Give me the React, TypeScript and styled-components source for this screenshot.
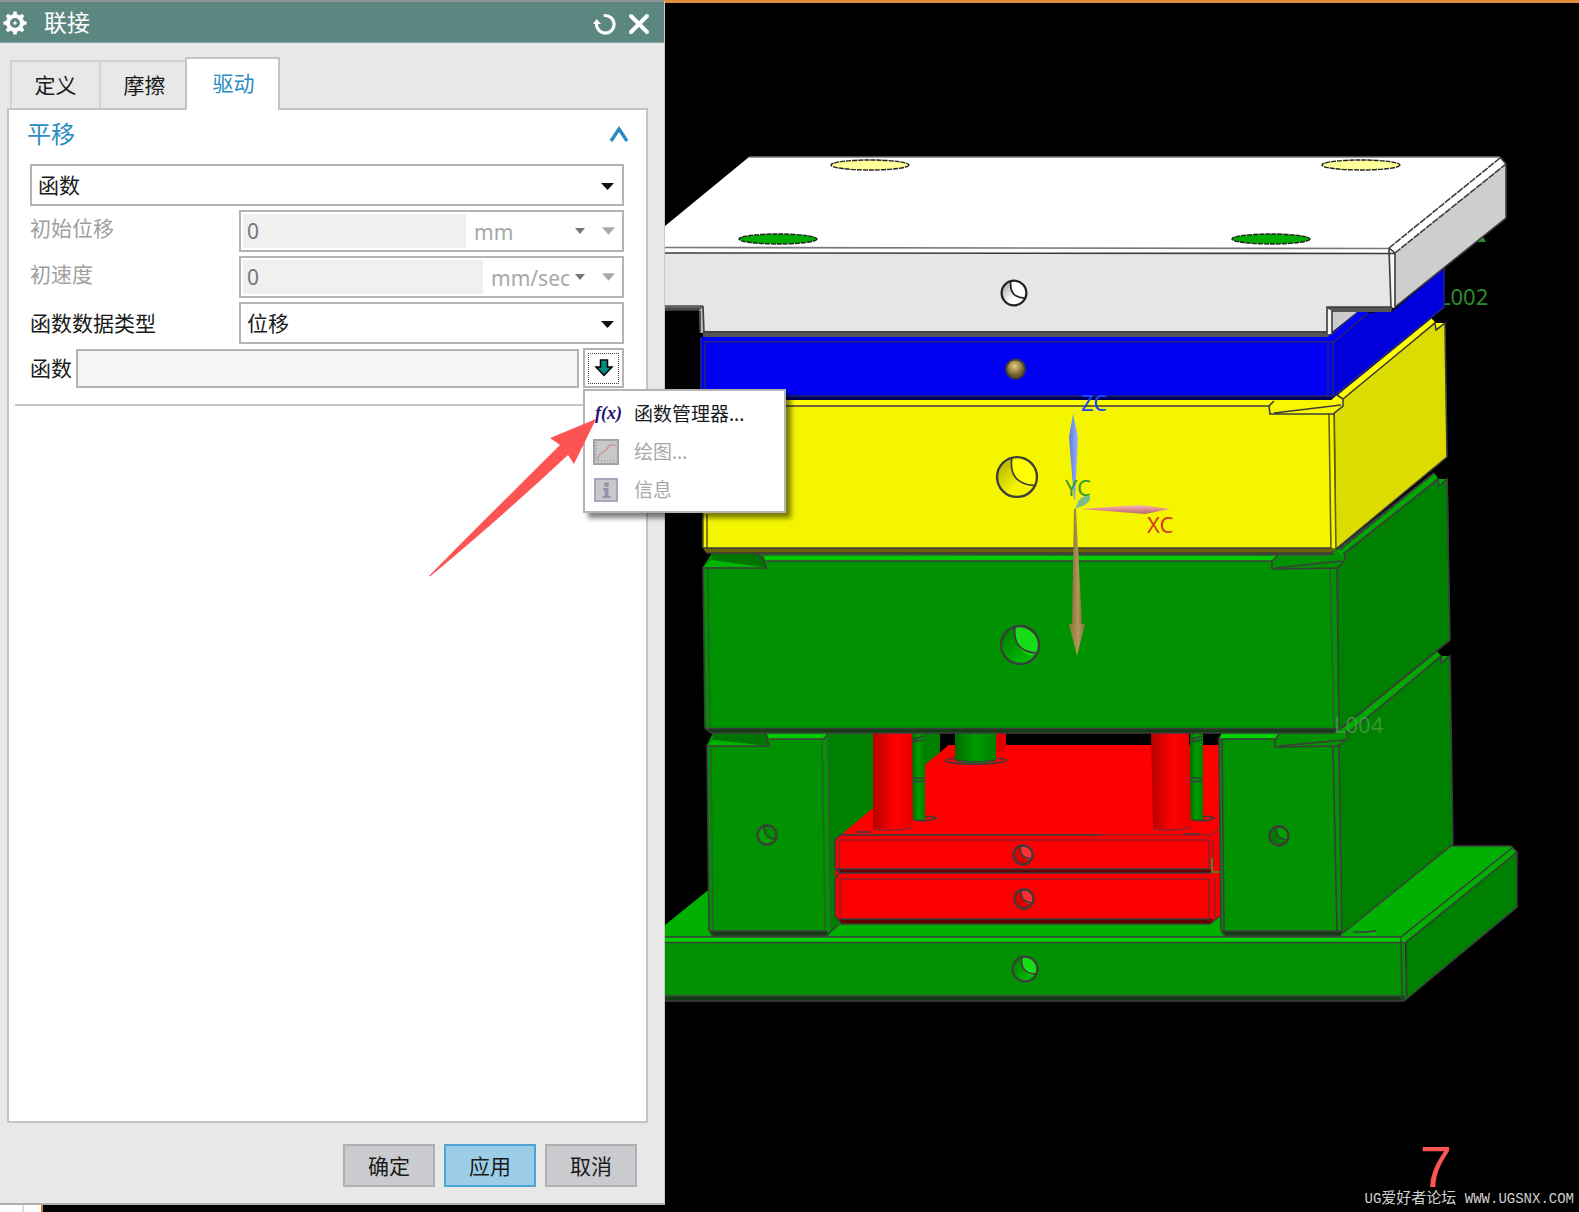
import React from "react";
import styled, { createGlobalStyle, css } from "styled-components";

const GlobalStyle = createGlobalStyle`
  *, *::before, *::after { box-sizing: border-box; }
  body {
    margin: 0;
    background: #000;
    font-family: "Noto Sans", "Noto Sans CJK SC", sans-serif;
    font-size: 21px;
    line-height: 28px;
    color: #1a1a1a;
  }
  button, input, select { font: inherit; color: inherit; margin: 0; }
`;

const Screen = styled.div`
  display: grid;
  grid-template-columns: 665px minmax(0, 1fr);
  min-height: 100vh;
`;

const LeftColumn = styled.div`
  display: flex;
  flex-direction: column;
`;

const Dialog = styled.section`
  flex: 1;
  display: flex;
  flex-direction: column;
  background: #e8e8e8;
  border-top: 2px solid #8c9494;
  border-right: 1px solid #c8c8c8;
  border-bottom: 2px solid #b0b0b0;
`;

const TitleBar = styled.header`
  display: flex;
  align-items: center;
  height: 41px;
  padding: 0 14px 0 3px;
  background: #5b8780;
  border-bottom: 1px solid #7fa39d;
  color: #fff;
`;

const Title = styled.h1`
  flex: 1;
  margin: 0 0 0 17px;
  font-size: 23px;
  font-weight: 400;
  line-height: 28px;
`;

const TitleButton = styled.button`
  display: flex;
  padding: 4px 0 0;
  margin-left: 11px;
  border: 0;
  background: none;
`;

const Body = styled.div`
  flex: 1;
  display: flex;
  flex-direction: column;
  padding: 14px 16px 16px 7px;
`;

const Tabs = styled.div`
  display: flex;
  align-items: flex-end;
  padding-left: 3px;
`;

const Tab = styled.button<{ $active?: boolean }>`
  height: 48px;
  width: 89px;
  padding: 0;
  border: 2px solid #d2d2d2;
  border-bottom: 0;
  border-right: 0;
  background: #e8e8e8;
  ${(p) =>
    p.$active &&
    css`
      position: relative;
      height: 53px;
      width: 95px;
      margin-bottom: -2px;
      margin-left: -3px;
      padding: 0 0 4px 2px;
      background: #fff;
      border-right: 2px solid #c4c4c4;
      border-color: #c4c4c4;
      color: #2b8cc4;
    `}
`;

const Panel = styled.div`
  flex: 1;
  border: 2px solid #c4c4c4;
  background: #fff;
  padding: 8px 6px;
`;

const GroupHeader = styled.div`
  display: flex;
  align-items: center;
  justify-content: space-between;
  height: 32px;
  padding: 0 11px 0 12px;
  color: #2b8cc4;
`;

const GroupTitle = styled.h2`
  margin: 0;
  font-size: 24px;
  font-weight: 400;
  line-height: 32px;
`;

const Toggle = styled.button`
  display: flex;
  padding: 0;
  border: 0;
  background: none;
`;

const Form = styled.div`
  display: grid;
  grid-template-columns: 209px minmax(0, 1fr);
  gap: 4px 0;
  align-items: center;
  padding: 14px 16px 16px 15px;
  border-bottom: 2px solid #c8c8c8;
`;

const Label = styled.label<{ $dim?: boolean }>`
  color: ${(p) => (p.$dim ? "#a0a0a0" : "#1a1a1a")};
  padding-bottom: ${(p) => (p.$dim ? "6px" : "0")};
`;

const SelectBox = styled.div<{ $wide?: boolean }>`
  position: relative;
  height: 42px;
  border: 2px solid #b4b4b4;
  background: #fff;
  grid-column: ${(p) => (p.$wide ? "1 / -1" : "auto")};
`;

const Select = styled.select`
  appearance: none;
  width: 100%;
  height: 100%;
  padding: 0 32px 0 6px;
  border: 0;
  background: transparent;
`;

const Caret = styled.svg`
  position: absolute;
  right: 8px;
  top: 17px;
  pointer-events: none;
`;

const ValueField = styled.div`
  display: flex;
  height: 42px;
  padding: 2px;
  border: 2px solid #b4b4b4;
  background: #fff;
`;

const ValueInput = styled.input`
  flex: 1;
  min-width: 0;
  padding: 0 4px;
  border: 0;
  background: #f0f0f0;
  color: #777;
`;

const UnitBox = styled.div<{ $wide?: boolean }>`
  position: relative;
  width: ${(p) => (p.$wide ? "122px" : "105px")};
  color: #a8a8a8;
`;

const UnitSelect = styled.select`
  appearance: none;
  width: 100%;
  height: 100%;
  padding: 2px 0 0 8px;
  border: 0;
  background: transparent;
  opacity: 1;
`;

const UnitCaret = styled.svg`
  position: absolute;
  right: 3px;
  top: 14px;
  pointer-events: none;
`;

const MoreButton = styled.button`
  display: flex;
  align-items: center;
  justify-content: center;
  width: 32px;
  padding: 0 0 0 9px;
  border: 0;
  background: none;
`;

const FunctionRow = styled.div`
  grid-column: 1 / -1;
  display: flex;
  align-items: center;
  gap: 4px;
`;

const FunctionInput = styled.input`
  flex: 1;
  min-width: 0;
  height: 39px;
  border: 2px solid #b4b4b4;
  background: #f5f5f5;
`;

const MenuAnchor = styled.div`
  position: relative;
`;

const MenuButton = styled.button`
  display: flex;
  align-items: center;
  justify-content: center;
  width: 41px;
  height: 40px;
  padding: 3px;
  border: 2px solid #b4b4b4;
  background: #fff;
  & > span {
    display: flex;
    align-items: center;
    justify-content: center;
    width: 31px;
    height: 31px;
    border: 1px dotted #444;
  }
`;

const Menu = styled.div`
  position: absolute;
  z-index: 2;
  top: 41px;
  left: 0;
  width: 203px;
  padding: 4px 0 2px;
  border: 2px solid #b4b4b4;
  background: #fff;
  box-shadow: 5px 5px 5px rgba(0, 0, 0, 0.5);
`;

const MenuItem = styled.button`
  display: flex;
  align-items: center;
  width: 100%;
  height: 38px;
  padding: 0 0 0 7px;
  gap: 12px;
  border: 0;
  background: none;
  font-size: 19px;
  white-space: nowrap;
  &:disabled { color: #a8a8a8; }
`;

const PointerArrow = styled.svg`
  position: absolute;
  z-index: 3;
  top: 67px;
  left: -158px;
  pointer-events: none;
`;

const Footer = styled.footer`
  display: flex;
  justify-content: flex-end;
  gap: 9px;
  padding: 21px 11px 0 0;
`;

const ActionButton = styled.button<{ $primary?: boolean }>`
  width: 92px;
  height: 43px;
  padding: 0;
  border: 2px solid ${(p) => (p.$primary ? "#4ea5d4" : "#b0b0b0")};
  background: ${(p) => (p.$primary ? "#9bcde7" : "#cacbcf")};
`;

const WindowEdge = styled.div`
  width: 43px;
  height: 7px;
  background: linear-gradient(to right, #fff 22px, #ddd 22px, #ddd 24px, #fff 24px);
  border-right: 2px solid #c87828;
`;

const Viewport = styled.main`
  position: relative;
  background: #000;
  border-top: 3px solid #e08c3c;
`;

const Model = styled.svg`
  display: block;
  width: 100%;
  font-size: 22px;
`;

const Marks = styled.div`
  position: absolute;
  right: 5px;
  bottom: 0;
`;

const StepNumber = styled.div`
  padding-right: 122px;
  text-align: right;
  font-family: "Liberation Sans", sans-serif;
  font-size: 58px;
  line-height: 40px;
  color: #fc5353;
`;

const Watermark = styled.div`
  font-family: "Liberation Mono", "Noto Sans CJK SC", monospace;
  font-size: 14px;
  line-height: 24px;
  color: #d0d0d0;
  & > span { font-size: 15px; }
`;

const teeth = [0, 45, 90, 135, 180, 225, 270, 315];

const GearIcon = () => (
  <svg width="24" height="26" viewBox="0 -2 24 26" aria-hidden="true">
    <circle cx="12" cy="12" r="7" fill="none" stroke="#fff" strokeWidth="4" />
    {teeth.map((a) => (
      <path key={a} d="M9.8 4 L10.4 .4 H13.6 L14.2 4Z" fill="#fff" transform={`rotate(${a} 12 12)`} />
    ))}
    <circle cx="12" cy="12" r="1.7" fill="#fff" />
  </svg>
);

const Triangle = ({ fill }: { fill: string }) => (
  <svg width="13" height="8" viewBox="0 0 12 7" aria-hidden="true">
    <path d="M0 0H12L6 7Z" fill={fill} />
  </svg>
);

const DropDown = ({ id, value, wide, label }: { id: string; value: string; wide?: boolean; label?: string }) => (
  <SelectBox $wide={wide}>
    <Select id={id} aria-label={label}>
      <option>{value}</option>
    </Select>
    <Caret width="13" height="7" viewBox="0 0 13 7" aria-hidden="true">
      <path d="M0 0H13L6.5 7Z" fill="#111" />
    </Caret>
  </SelectBox>
);

const Quantity = ({ id, unit, wide }: { id: string; unit: string; wide?: boolean }) => (
  <ValueField>
    <ValueInput id={id} defaultValue="0" disabled />
    <UnitBox $wide={wide}>
      <UnitSelect disabled aria-label="单位">
        <option>{unit}</option>
      </UnitSelect>
      <UnitCaret width="10" height="6" viewBox="0 0 10 6" aria-hidden="true">
        <path d="M0 0H10L5 6Z" fill="#777" />
      </UnitCaret>
    </UnitBox>
    <MoreButton disabled aria-label="更多">
      <Triangle fill="#aaa" />
    </MoreButton>
  </ValueField>
);

type Face = [points: string, fill: string];

const Faces = ({ items }: { items: Face[] }) => (
  <>
    {items.map(([points, fill], i) => (
      <polygon key={i} points={points} fill={fill} />
    ))}
  </>
);

const edge = "#3c3c3c";

const Edges = ({ d, color = edge, dash }: { d: string; color?: string; dash?: boolean }) => (
  <path d={d} fill="none" stroke={color} strokeWidth="1.6" strokeDasharray={dash ? "7 1" : undefined} />
);

const Bore = ({ x, y, r, fill, shine, stroke = edge }: { x: number; y: number; r: number; fill: string; shine: string; stroke?: string }) => (
  <g transform={`translate(${x} ${y}) scale(${r / 20})`}>
    <circle r="19" fill={fill} />
    <path d="M-5 -18C6 -20 19 -10 19 2C17 8 14 10 10 10C0 7 -7 -2 -5 -18Z" fill={shine} />
    <path d="M-5 -18C-7 -2 0 7 16 8" fill="none" stroke={stroke} strokeWidth={34 / r} />
    <circle r="19" fill="none" stroke={stroke} strokeWidth={46 / r} />
  </g>
);

const MoldModel = () => (
  <Model viewBox="665 3 914 1209" role="img" aria-label="模架三维模型">
    <defs>
      <linearGradient id="redPin">
        <stop offset="0" stopColor="#b80000" />
        <stop offset=".55" stopColor="#ff0000" />
        <stop offset="1" stopColor="#e80000" />
      </linearGradient>
      <linearGradient id="greenPin">
        <stop offset="0" stopColor="#006c00" />
        <stop offset=".5" stopColor="#009c00" />
        <stop offset="1" stopColor="#008000" />
      </linearGradient>
      <linearGradient id="under" x2="0" y2="1">
        <stop offset="0" stopColor="#777" />
        <stop offset="1" stopColor="#333" />
      </linearGradient>
      <linearGradient id="steel" x2="1" y2="1">
        <stop offset="0" stopColor="#999" />
        <stop offset=".6" stopColor="#fff" />
      </linearGradient>
      <linearGradient id="brass" x2="1" y2="1">
        <stop offset="0" stopColor="#a8a800" />
        <stop offset=".6" stopColor="#f4f400" />
      </linearGradient>
      <linearGradient id="leaf" x2="1" y2="1">
        <stop offset="0" stopColor="#007400" />
        <stop offset=".8" stopColor="#00bc00" />
      </linearGradient>
      <radialGradient id="ball" cx=".45" cy=".35">
        <stop offset="0" stopColor="#e4cc80" />
        <stop offset="1" stopColor="#6c5c28" />
      </radialGradient>
      <linearGradient id="axisZ">
        <stop offset="0" stopColor="#5a7ae0" />
        <stop offset="1" stopColor="#9ab4ff" />
      </linearGradient>
      <linearGradient id="axisX" x2="0" y2="1">
        <stop offset="0" stopColor="#ffb4b4" />
        <stop offset="1" stopColor="#b86868" />
      </linearGradient>
      <linearGradient id="axisDown">
        <stop offset="0" stopColor="#8c743c" />
        <stop offset=".6" stopColor="#b09858" />
        <stop offset="1" stopColor="#84703c" />
      </linearGradient>
    </defs>

    <text x="1439" y="305" fill="#2c8c2c">L002</text>
    <path d="M1477 242L1483 237L1486 242Z" fill="#2c8c2c" />

    <Faces
      items={[
        ["665,925 712,887 1453,846 1511,846 1517,852 1404,944 665,940", "#00b000"],
        ["665,937 1402,937 1406,943 665,943", "#00d400"],
        ["665,943 1405,943 1405,998 665,998", "#009000"],
        ["665,996 1406,996 1403,1001 665,1001", "#143c14"],
        ["1406,943 1517,852 1517,907 1404,1001", "#008000"],
      ]}
    />
    <Edges d="M665 937H1401M665 942.5H1405M1401 937L1402 1000M1406 942L1407 997M1401 937L1512 848M1406 942L1517 852M1517 852V907L1404 1001M1453 846H1511L1517 852M665 996H1402M665 1001H1404M1353 932H1365L1376 931" />

    <Faces
      items={[
        ["828,733 940,733 940,757 840,840 840,922 827,936", "#008000"],
        ["949,745 1222,745 1222,916 1210,923 841,923 835,917 835,840", "#fa0000"],
        ["949,745 1222,745 1222,829 1210,836 840,836", "#ff0000"],
        ["835,869 1210,869 1213,873 839,873", "#640000"],
        ["839,919 1213,919 1210,924 841,924", "#640000"],
        ["996,733 1006,733 1006,752 996,752", "#e00000"],
      ]}
    />
    <rect x="912" y="733" width="13" height="87" fill="url(#greenPin)" />
    <rect x="1190" y="733" width="13" height="87" fill="url(#greenPin)" />
    <path d="M955 733V761Q975 766 996 761V733Z" fill="url(#greenPin)" />
    <path d="M873 733V828Q893 831 913 827L912 733Z" fill="url(#redPin)" />
    <path d="M1151 733L1153 828Q1170 831 1191 827L1189 733Z" fill="url(#redPin)" />
    <Edges d="M912 740L924 736M912 742L924 740M912 778H924M912 782L924 781M1190 740L1202 736M1190 742L1202 740M1190 778H1202M1190 782L1202 781M914 820Q930 822 936 818Q930 815 925 817M1192 820Q1208 822 1214 818Q1208 815 1203 817M955 758C935 761 950 764 975 764C1000 764 1018 760 996 758M955 760Q975 764 996 760M855 832H871M1183 834H1200" />
    <Edges color="#90202a" d="M840 835H1209M838 840H1209M840 879H1209M839 840V869M840 879V919M1209 840V869M1209 879V919M1213 840V867M1215 878V919M1209 837L1219 828M873 829Q893 832 913 828M1153 829Q1170 832 1191 828" />
    <Edges d="M838 835H1100M835 840L840 835M835 840V868L840 872L835 879V916L841 923M836 869H1210M840 873H1212M840 919H1210M841 924H1210L1220 916" />
    <Edges color="#30a030" d="M1212 858V872H1221" />

    <Faces
      items={[
        ["707,745 713,733 828,733 831,929 827,936 713,936 709,930", "#009200"],
        ["767,733 829,733 824,739 769,739", "#00cc00"],
        ["713,734 766,734 769,746 713,740", "#007400"],
        ["713,740 769,746 707,746", "#00b400"],
        ["710,931 828,931 826,936 713,936", "#143c14"],
        ["1219,738 1222,733 1340,727 1349,738 1343,933 1340,936 1225,936 1221,931", "#009200"],
        ["1222,733 1279,733 1275,739 1219,739", "#00d400"],
        ["1221,931 1343,931 1340,936 1224,936", "#143c14"],
        ["1340,729 1437,651 1441,656 1348,736", "#00a800"],
        ["1340,746 1348,738 1346,733 1441,657 1442,663 1448,656 1450,656 1453,844 1343,933", "#008000"],
        ["1448,656 1442,656 1442,663", "#00a800"],
      ]}
    />
    <Edges color="#2c6030" d="M711 746L713 932M822 739L825 932M828 734L831 928" />
    <Edges d="M707 746H769L766 734M769 739H824L828 734M707 745L709 930L713 936H827L831 931L841 923M710 931H826M1219 738L1221 930L1225 936H1340L1343 931M1219 739H1275M1222 739L1224 931H1340M1279 734L1275 740V747L1338 746L1348 738L1346 730M1279 746L1345 740M1333 747L1337 932M1339 744L1342 932M1342 728L1437 651M1348 734L1441 656V663L1450 656L1453 844L1343 933" />

    <Faces
      items={[
        ["703,567 712,553 1331,552 1341,547 1347,556 1339,729 1334,733 711,733 705,728", "#009200"],
        ["712,552 1331,552 1328,556 712,556", "#2c6c2c"],
        ["764,556 1278,556 1273,561 766,561", "#00cc00"],
        ["712,553 755,553 763,557 766,567 712,560", "#007400"],
        ["712,560 766,568 703,567", "#00b400"],
        ["706,728 1339,728 1334,733 711,733", "#143c14"],
        ["1336,551 1434,473 1438,478 1345,558", "#00a800"],
        ["1337,568 1345,559 1344,552 1438,479 1439,486 1446,479 1448,479 1450,640 1339,730", "#008000"],
        ["1447,479 1438,479 1439,486", "#00a800"],
      ]}
    />
    <Edges color="#2c6030" d="M708 569L710 728M1330 569L1334 730" />
    <Edges d="M712 553L1334 554M766 561H1272M712 553H755Q765 557 766 568H704M703 567L705 728L711 733H1334L1339 729M706 728.5H1335M1278 555L1272 561V569L1337 568L1345 560L1344 552M1275 568L1342 561M1337 568L1339 728M1338 549L1434 473M1345 553L1438 479L1439 486L1447 479L1450 640L1339 730" />

    <Faces
      items={[
        ["703,400 1334,400 1336,550 1331,553 707,553 703,548", "#f5f500"],
        ["703,400 1274,400 1269,406 703,406", "#ffff00"],
        ["703,548 1335,548 1331,553 707,553", "#686400"],
        ["1338,394 1431,318 1435,322 1343,401", "#ffff00"],
        ["1335,413 1343,405 1342,399 1435,323 1436,330 1443,323 1445,323 1447,457 1336,549", "#dcdc00"],
        ["1444,323 1435,323 1436,330", "#ffff00"],
        ["1274,401 1269,406 1270,414 1333,414 1343,406 1343,399 1337,395 1330,401", "#f8f800"],
      ]}
    />
    <Edges color="#65610a" d="M703 514V548M707 514V548M1329 414L1331 552M1334 414L1336 550" />
    <Edges d="M703 406H1269M1274 401L1269 406L1270 414H1333L1343 406V399L1337 395M1274 413L1341 405M703 548H1331M707 553H1331L1336 549L1447 457L1445 323L1436 330L1435 323L1343 399M1338 394L1431 318" />
    <Edges dash d="M1340 550L1434 473" />

    <Faces
      items={[
        ["700,337 1327,335 1334,342 1334,397 1329,400 704,400 700,396", "#0000f5"],
        ["704,395 1334,395 1329,400 704,400", "#000058"],
        ["1334,342 1368,313 1393,311 1444,268 1444,308 1334,397", "#0000dc"],
        ["1327,337 1357,312 1368,312 1334,342", "#0000ff"],
        ["1332,312 1357,312 1332,332", "#cccccc"],
      ]}
    />
    <Edges color="#24247c" d="M704 342H1334L1368 313M701 337V395M705 342V395M1328 341V397M1333 342V396M704 396H1333L1444 307V268M1331 335L1357 313" />

    <Faces
      items={[
        ["665,226 749,157 1500,157 1506,164 1395,254 665,254", "#ffffff"],
        ["665,253 1395,254 1395,308 1327,308 1327,333 704,333 703,306 665,306", "#e6e6e6"],
        ["1389,249 1395,254 1395,307 1391,308", "#f6f6f6"],
        ["1395,253 1506,164 1506,218 1395,307", "#cecece"],
        ["665,305 703,305 700,311 665,311", "url(#under)"],
        ["699,311 703,306 704,333 700,333", "#b8b8b8"],
        ["703,331 1333,331 1328,337 703,337", "#555555"],
        ["1327,307 1393,307 1391,312 1332,312", "#555555"],
        ["1327,308 1332,311 1332,334 1327,334", "#f4f4f4"],
      ]}
    />
    <Edges color="#777" d="M665 247.5L1389 248.5M749 157H1500" />
    <Edges d="M665 253L1395 253.5M1389 249L1391 307M1395 253V307L1506 218V164L1500 157M1327 334V307H1392M1332 334V311M703 332H1327M703 306L704 333M700 311V333M1389 248L1395 253" />
    <Edges dash d="M1389 248L1500 158M1395 253L1506 164" />

    {[870, 1361].map((x) => (
      <ellipse key={x} cx={x} cy="165" rx="39" ry="5" fill="#ffff99" stroke="#222" strokeWidth="1.4" strokeDasharray="5 1" />
    ))}
    {[778, 1271].map((x) => (
      <ellipse key={x} cx={x} cy="239" rx="39" ry="5" fill="#00ac00" stroke="#222" strokeWidth="1.4" strokeDasharray="5 1" />
    ))}

    <Bore x={1014} y={293} r={13} fill="url(#steel)" shine="#ffffff" stroke="#222" />
    <circle cx="1015.5" cy="369" r="9.5" fill="url(#ball)" stroke={edge} strokeWidth="2" />
    <Bore x={1017} y={477} r={21} fill="url(#brass)" shine="#ffff00" />
    <Bore x={1020} y={645} r={20} fill="url(#leaf)" shine="#18dc18" />
    <Bore x={767} y={835} r={10} fill="#00a000" shine="#008c00" />
    <Bore x={1279} y={836} r={10} fill="#007c00" shine="#00a000" />
    <Bore x={1023} y={855} r={10} fill="#d80000" shine="#ff3030" />
    <Bore x={1024} y={899} r={10} fill="#d80000" shine="#ff3030" />
    <Bore x={1025} y={969} r={13} fill="url(#leaf)" shine="#18dc18" />

    <path d="M1073 414L1078 437L1075 500H1074L1069 437Z" fill="url(#axisZ)" />
    <path d="M1081 509L1140 505L1170 509L1145 514Z" fill="url(#axisX)" />
    <path d="M1074 509H1076L1082 624H1072Z" fill="url(#axisDown)" />
    <path d="M1069 624H1085L1077 656Z" fill="url(#axisDown)" />
    <path d="M1075 509L1079 500Q1085 494 1090 496Q1091 501 1085 505Z" fill="#80bc90" />
    <text x="1081" y="411" fill="#1848ff">ZC</text>
    <text x="1065" y="496" fill="#3c9c30">YC</text>
    <text x="1147" y="533" fill="#d83c20">XC</text>
    <text x="1334" y="733" fill="#4ca44c" fillOpacity=".7">L004</text>
  </Model>
);

export default function App() {
  return (
    <>
      <GlobalStyle />
      <Screen>
        <LeftColumn>
          <Dialog aria-label="联接">
            <TitleBar>
              <GearIcon />
              <Title>联接</Title>
              <TitleButton aria-label="重置">
                <svg width="24" height="24" viewBox="0 0 24 24" aria-hidden="true">
                  <path d="M12 3.5A8.800 8.800 0 1 1 3.500 12.500" fill="none" stroke="#fff" strokeWidth="3.200" strokeLinecap="round" />
                  <path d="M0 12L3.500 7L8 12Z" fill="#fff" />
                </svg>
              </TitleButton>
              <TitleButton aria-label="关闭">
                <svg width="22" height="22" viewBox="0 0 22 22" aria-hidden="true">
                  <path d="M3 3L19 19M19 3L3 19" stroke="#fff" strokeWidth="4" strokeLinecap="round" />
                </svg>
              </TitleButton>
            </TitleBar>
            <Body>
              <Tabs role="tablist">
                <Tab role="tab">定义</Tab>
                <Tab role="tab">摩擦</Tab>
                <Tab role="tab" aria-selected="true" $active>驱动</Tab>
              </Tabs>
              <Panel>
                <GroupHeader>
                  <GroupTitle>平移</GroupTitle>
                  <Toggle aria-label="折叠">
                    <svg width="20" height="16" viewBox="0 0 20 16" aria-hidden="true">
                      <path d="M2 15L10 3L18 15" fill="none" stroke="#2b8cc4" strokeWidth="3.400" />
                    </svg>
                  </Toggle>
                </GroupHeader>
                <Form>
                  <DropDown id="motion" value="函数" wide label="平移" />
                  <Label htmlFor="displacement" $dim>初始位移</Label>
                  <Quantity id="displacement" unit="mm" wide />
                  <Label htmlFor="velocity" $dim>初速度</Label>
                  <Quantity id="velocity" unit="mm/sec" />
                  <Label htmlFor="datatype">函数数据类型</Label>
                  <DropDown id="datatype" value="位移" />
                  <FunctionRow>
                    <Label htmlFor="fn">函数</Label>
                    <FunctionInput id="fn" readOnly />
                    <MenuAnchor>
                      <MenuButton aria-label="函数选项" aria-haspopup="menu">
                        <span>
                          <svg width="20" height="18" viewBox="0 0 20 18" aria-hidden="true">
                            <path d="M6.500 1H13.500V8H18L10 16.500L2 8H6.500Z" fill="#008a80" stroke="#000" strokeWidth="1.500" />
                          </svg>
                        </span>
                      </MenuButton>
                      <Menu role="menu">
                        <MenuItem role="menuitem">
                          <svg width="30" height="26" viewBox="0 0 30 26" aria-hidden="true">
                            <text x="3" y="18" fontFamily="Liberation Serif, serif" fontSize="18" fontStyle="italic" fontWeight="700" fill="#24106c">f(x)</text>
                          </svg>
                          函数管理器...
                        </MenuItem>
                        <MenuItem role="menuitem" disabled>
                          <svg width="30" height="26" viewBox="0 0 30 26" aria-hidden="true">
                            <rect x="2" y="1" width="24" height="24" fill="#c8c8c8" stroke="#a0a0ac" strokeWidth="2" />
                            <path d="M4 3V22H24" fill="none" stroke="#888" strokeDasharray="1 2" />
                            <path d="M5 21L8 15L13 12L18 6H24" fill="none" stroke="#c89898" strokeWidth="1.500" />
                          </svg>
                          绘图...
                        </MenuItem>
                        <MenuItem role="menuitem" disabled>
                          <svg width="30" height="26" viewBox="0 0 30 26" aria-hidden="true">
                            <rect x="3" y="2" width="22" height="22" fill="#c8c8cc" stroke="#a8a8bc" strokeWidth="2" />
                            <circle cx="14.500" cy="7.500" r="2.500" fill="#9494a8" />
                            <path d="M11 11H16.500V19H18.500V21H10.500V19H12.500V13H11Z" fill="#9494a8" />
                          </svg>
                          信息
                        </MenuItem>
                      </Menu>
                      <PointerArrow width="176" height="166" viewBox="425 415 176 166" aria-hidden="true">
                        <path d="M596 419L550 438L560 445C520 485 480 524 429 576L430 576.500C480 535 525 495 568 455L574 464Z" fill="#fc5353" />
                      </PointerArrow>
                    </MenuAnchor>
                  </FunctionRow>
                </Form>
              </Panel>
              <Footer>
                <ActionButton>确定</ActionButton>
                <ActionButton $primary>应用</ActionButton>
                <ActionButton>取消</ActionButton>
              </Footer>
            </Body>
          </Dialog>
          <WindowEdge />
        </LeftColumn>
        <Viewport>
          <MoldModel />
          <Marks>
            <StepNumber>7</StepNumber>
            <Watermark>
              UG<span>爱好者论坛</span> WWW.UGSNX.COM
            </Watermark>
          </Marks>
        </Viewport>
      </Screen>
    </>
  );
}
